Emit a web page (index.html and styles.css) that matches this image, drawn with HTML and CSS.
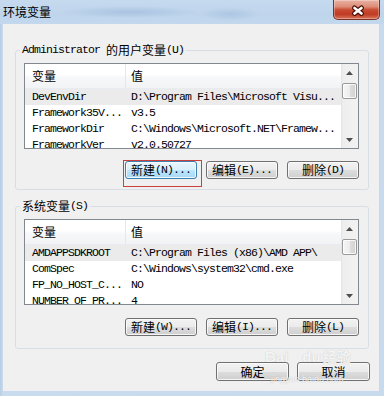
FILE: index.html
```html
<!DOCTYPE html>
<html lang="zh-CN">
<head>
<meta charset="utf-8">
<title>环境变量</title>
<link rel="stylesheet" href="styles.css">
</head>
<body>
<div class="window">
  <div class="titlebar">
    <span class="title">环境变量</span>
    <div class="close-btn">
      <svg width="45" height="19" viewBox="0 0 45 19">
        <path d="M20.5 8 L27.5 13.5 M27.5 8 L20.5 13.5" stroke="#4a1209" stroke-width="5" stroke-linecap="round" fill="none"/>
        <path d="M20.5 8 L27.5 13.5 M27.5 8 L20.5 13.5" stroke="#ffffff" stroke-width="2.6" stroke-linecap="round" fill="none"/>
      </svg>
    </div>
  </div>
  <div class="client">
    <fieldset class="group group-user">
      <legend class="group-label"><span class="mono">Administrator </span><span class="cjk">的用户变量</span><span class="mono">(U)</span></legend>
      <div class="group-body">
        <div class="listview">
          <div class="lv-main">
            <div class="lv-header">
              <div class="lv-col lv-col1"><span class="cjk">变量</span></div>
              <div class="lv-col lv-col2"><span class="cjk">值</span></div>
            </div>
            <div class="lv-row is-selected"><span class="lv-cell lv-cell1">DevEnvDir</span><span class="lv-cell lv-cell2">D:\Program Files\Microsoft Visu...</span></div>
            <div class="lv-row"><span class="lv-cell lv-cell1">Framework35V...</span><span class="lv-cell lv-cell2">v3.5</span></div>
            <div class="lv-row"><span class="lv-cell lv-cell1">FrameworkDir</span><span class="lv-cell lv-cell2">C:\Windows\Microsoft.NET\Framew...</span></div>
            <div class="lv-row"><span class="lv-cell lv-cell1">FrameworkVer</span><span class="lv-cell lv-cell2">v2.0.50727</span></div>
          </div>
          <div class="vscroll">
            <div class="sb-arrow"><svg width="7" height="4" viewBox="0 0 7 4"><path d="M0 4 L3.5 0 L7 4 Z" fill="#4d4d4d"/></svg></div>
            <div class="sb-thumb"></div>
            <div class="sb-track"></div>
            <div class="sb-arrow"><svg width="7" height="4" viewBox="0 0 7 4"><path d="M0 0 L7 0 L3.5 4 Z" fill="#4d4d4d"/></svg></div>
          </div>
        </div>
        <div class="btnrow">
          <div class="btn btn-default is-annotated"><span class="cjk">新建</span>(N)...</div>
          <div class="btn"><span class="cjk">编辑</span>(E)...</div>
          <div class="btn"><span class="cjk">删除</span>(D)</div>
        </div>
      </div>
    </fieldset>

    <fieldset class="group group-system">
      <legend class="group-label"><span class="cjk">系统变量</span><span class="mono">(S)</span></legend>
      <div class="group-body">
        <div class="listview">
          <div class="lv-main">
            <div class="lv-header">
              <div class="lv-col lv-col1"><span class="cjk">变量</span></div>
              <div class="lv-col lv-col2"><span class="cjk">值</span></div>
            </div>
            <div class="lv-row is-selected"><span class="lv-cell lv-cell1">AMDAPPSDKROOT</span><span class="lv-cell lv-cell2">C:\Program Files (x86)\AMD APP\</span></div>
            <div class="lv-row"><span class="lv-cell lv-cell1">ComSpec</span><span class="lv-cell lv-cell2">C:\Windows\system32\cmd.exe</span></div>
            <div class="lv-row"><span class="lv-cell lv-cell1">FP_NO_HOST_C...</span><span class="lv-cell lv-cell2">NO</span></div>
            <div class="lv-row"><span class="lv-cell lv-cell1">NUMBER_OF_PR...</span><span class="lv-cell lv-cell2">4</span></div>
          </div>
          <div class="vscroll">
            <div class="sb-arrow"><svg width="7" height="4" viewBox="0 0 7 4"><path d="M0 4 L3.5 0 L7 4 Z" fill="#4d4d4d"/></svg></div>
            <div class="sb-thumb"></div>
            <div class="sb-track"></div>
            <div class="sb-arrow"><svg width="7" height="4" viewBox="0 0 7 4"><path d="M0 0 L7 0 L3.5 4 Z" fill="#4d4d4d"/></svg></div>
          </div>
        </div>
        <div class="btnrow">
          <div class="btn"><span class="cjk">新建</span>(W)...</div>
          <div class="btn"><span class="cjk">编辑</span>(I)...</div>
          <div class="btn"><span class="cjk">删除</span>(L)</div>
        </div>
      </div>
    </fieldset>

    <div class="dlg-buttons">
      <div class="btn btn-lg"><span class="cjk">确定</span></div>
      <div class="btn btn-lg"><span class="cjk">取消</span></div>
    </div>

    <div class="watermark">
      <div class="wm-logo">Bai<span class="wm-du">du</span><span class="wm-cjk">经验</span></div>
      <div class="wm-url">jingyan.baidu.com</div>
    </div>
  </div>
</div>
</body>
</html>
```

FILE: styles.css
```css
* { box-sizing: border-box; }

html, body {
  margin: 0;
  padding: 0;
}

body {
  width: 384px;
  height: 396px;
  overflow: hidden;
  background: linear-gradient(to right, #b9cde2 0, #c9dcef 3px, #c7daee 100%);
  font-family: "Liberation Mono", "Noto Sans CJK SC", monospace;
  font-size: 11.5px;
  letter-spacing: -0.9px;
  color: #000;
}

.cjk {
  font-family: "Noto Sans CJK SC", sans-serif;
  font-size: 12px;
  letter-spacing: 0;
}

.mono {
  font-family: "Liberation Mono", monospace;
}

.window {
  width: 384px;
  height: 396px;
  display: flex;
  flex-direction: column;
}

/* ---------- title bar ---------- */
.titlebar {
  flex: none;
  height: 24px;
  display: flex;
  justify-content: space-between;
  align-items: flex-start;
  background:
    radial-gradient(ellipse 70px 6px at 130px 12px, rgba(150, 180, 215, 0.55), rgba(150, 180, 215, 0) 100%),
    radial-gradient(ellipse 30px 7px at 230px 14px, rgba(150, 180, 215, 0.45), rgba(150, 180, 215, 0) 100%),
    linear-gradient(#c6daee 0, #bfd5ec 60%, #c3d8ed 100%);
}

.title {
  font-family: "Noto Sans CJK SC", sans-serif;
  font-size: 12px;
  letter-spacing: 0;
  line-height: 24px;
  padding-left: 3px;
}

.close-btn {
  width: 47px;
  height: 20px;
  margin-right: 4px;
  border: 1px solid #7a3226;
  border-top: none;
  border-radius: 0 0 5px 5px;
  background: linear-gradient(#eab2a4 0, #dd8d78 35%, #c94a32 52%, #c03b24 75%, #d9755c 100%);
  box-shadow: inset 0 0 0 1px rgba(255, 255, 255, 0.3);
}

.close-btn svg {
  display: block;
}

/* ---------- client area ---------- */
.client {
  position: relative;
  flex: none;
  height: 367px;
  margin: 0 5px 0 3px;
  background: #f0f0f0;
  display: flex;
  flex-direction: column;
}

.group {
  margin: 19px 10px 0 12px;
  padding: 6px 9px 10px 4px;
  border: 1px solid #d5dfe5;
  border-radius: 3px;
  min-width: 0;
}

.group-system {
  margin-top: 9px;
  padding-bottom: 12px;
}

.group-label {
  padding: 0 2px;
  height: 14px;
  line-height: 14px;
  white-space: nowrap;
}

.group-label span {
  vertical-align: top;
  line-height: 14px;
}

.group-body {
  padding-left: 4px;
}

/* ---------- list view ---------- */
.listview {
  height: 86px;
  border: 1px solid #828790;
  background: #fff;
  display: flex;
}

.lv-main {
  flex: 1;
  min-width: 0;
  overflow: hidden;
}

.lv-header {
  display: flex;
  height: 25px;
  border-bottom: 1px solid #e8ecf0;
  background: linear-gradient(#ffffff 0, #ffffff 45%, #f7f8fa 55%, #f2f3f5 100%);
}

.lv-col {
  line-height: 24px;
  white-space: nowrap;
}

.lv-col1 {
  flex: none;
  width: 101px;
  padding-left: 7px;
  border-right: 1px solid #e3e8ee;
}

.lv-col2 {
  flex: 1;
  padding-left: 5px;
}

.lv-row {
  display: flex;
  height: 16px;
  line-height: 16px;
  white-space: nowrap;
}

.lv-row.is-selected {
  background: #ebebeb;
}

.lv-cell {
  overflow: hidden;
}

.lv-cell1 {
  flex: none;
  width: 101px;
  padding-left: 7px;
}

.lv-cell2 {
  flex: 1;
  padding-left: 5px;
}

/* ---------- scrollbar ---------- */
.vscroll {
  flex: none;
  width: 17px;
  display: flex;
  flex-direction: column;
  background: linear-gradient(to right, #e4e4e4 0, #eeeeee 2px, #f2f2f2 100%);
}

.sb-arrow {
  flex: none;
  height: 17px;
  display: flex;
  align-items: center;
  justify-content: center;
}

.sb-arrow svg {
  display: block;
}

.sb-thumb {
  flex: none;
  height: 16px;
  margin: 2px 1px 0 1px;
  border: 1px solid #9a9a9a;
  border-radius: 2px;
  background: linear-gradient(to right, #f6f6f6 0, #ececec 50%, #dedede 51%, #d2d2d2 100%);
  box-shadow: inset 0 0 0 1px rgba(255, 255, 255, 0.8);
}

.sb-track {
  flex: 1;
}

/* ---------- buttons ---------- */
.btnrow {
  display: flex;
  justify-content: flex-end;
  gap: 9px;
  margin-top: 12px;
}

.group-system .btnrow {
  margin-top: 13px;
}

.btn {
  flex: none;
  width: 72px;
  height: 18px;
  border: 1px solid #707070;
  border-radius: 3px;
  background: linear-gradient(#f2f2f2 0, #ebebeb 50%, #dddddd 51%, #cfcfcf 100%);
  box-shadow: inset 0 0 0 1px rgba(252, 252, 252, 0.85);
  display: flex;
  align-items: center;
  justify-content: center;
  white-space: nowrap;
  line-height: 16px;
}

.btn-default {
  border-color: #3c7fb1;
  background: linear-gradient(#eaf6fd 0, #d9f0fc 50%, #bee6fd 51%, #a7d9f5 100%);
}

.is-annotated {
  position: relative;
}

.is-annotated::after {
  content: "";
  position: absolute;
  left: -3px;
  top: -2px;
  right: -6px;
  bottom: -9px;
  border: 1px solid #c8413e;
}

.dlg-buttons {
  display: flex;
  justify-content: flex-end;
  gap: 8px;
  margin-top: 13px;
  padding-right: 9px;
}

.btn-lg {
  width: 73px;
  height: 19px;
}

/* ---------- watermark ---------- */
.watermark {
  position: absolute;
  left: 262px;
  top: 323px;
  color: rgba(255, 255, 255, 0.85);
  text-shadow: 0 0 1px rgba(140, 140, 140, 0.55);
  letter-spacing: 0;
  pointer-events: none;
}

.wm-logo {
  font-family: "Liberation Sans", sans-serif;
  font-weight: bold;
  font-size: 15px;
  line-height: 18px;
  white-space: nowrap;
}

.wm-du {
  margin-left: 14px;
}

.wm-cjk {
  font-family: "Noto Sans CJK SC", sans-serif;
  font-size: 14px;
  margin-left: 2px;
}

.wm-url {
  font-family: "Liberation Sans", sans-serif;
  font-size: 9px;
  line-height: 10px;
  margin-top: 8px;
  margin-left: 6px;
}
```
